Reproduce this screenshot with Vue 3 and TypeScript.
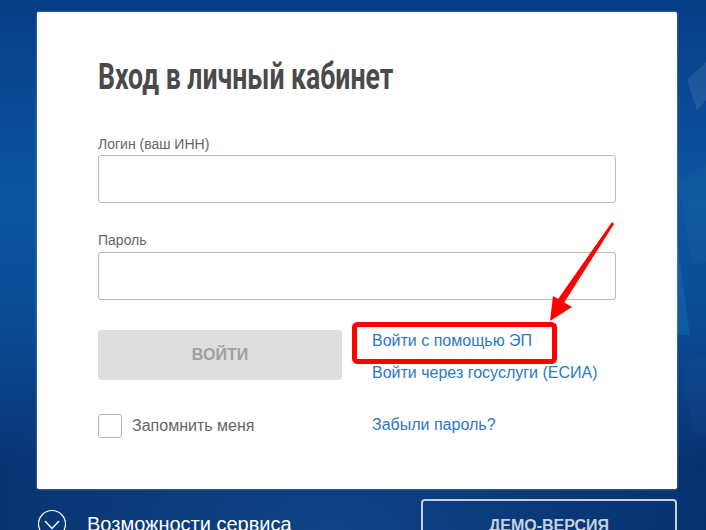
<script setup lang="ts">
const title = 'Вход в личный кабинет'
</script>

<template>
  <div class="page">
    <svg class="shards" width="706" height="530" viewBox="0 0 706 530">
      <polygon points="687,80 706,62 706,100 697,110" fill="#fff" opacity=".09" />
      <polygon points="678,180 706,165 706,262 692,265" fill="#fff" opacity=".025" />
      <polygon points="677,240 690,335 677,335" fill="#1f7fc4" opacity=".3" />
      <polygon points="680,362 706,355 706,436 694,436" fill="#fff" opacity=".02" />
      <polygon points="0,196 37,202 37,290 0,290" fill="#0b4f9c" opacity=".5" />
    </svg>

    <main class="card">
      <h1 class="title"><span>{{ title }}</span></h1>

      <label class="label">Логин (ваш ИНН)</label>
      <div class="input"></div>

      <label class="label second">Пароль</label>
      <div class="input"></div>

      <div class="actions">
        <div class="left">
          <button class="submit">ВОЙТИ</button>
          <div class="remember">
            <span class="check"></span>
            <span>Запомнить меня</span>
          </div>
        </div>
        <div class="links">
          <a>Войти с помощью ЭП</a>
          <a>Войти через госуслуги (ЕСИА)</a>
          <a class="forgot">Забыли пароль?</a>
        </div>
      </div>
    </main>

    <footer class="foot">
      <div class="features">
        <svg width="30" height="30" viewBox="0 0 30 30" fill="none" stroke="#fff">
          <circle cx="15" cy="15" r="13.5" stroke-width="1.2" />
          <path d="M8 12l7 7.5L22 12" stroke-width="1.4" />
        </svg>
        <span>Возможности сервиса</span>
      </div>
      <div class="demo">ДЕМО-ВЕРСИЯ</div>
    </footer>

    <!-- red annotation on top of the screenshot -->
    <svg class="mark" width="706" height="530" viewBox="0 0 706 530" fill="none">
      <rect x="354.5" y="324.5" width="200" height="37" rx="3" stroke="#fe0000" stroke-width="5" />
      <polygon points="612,222 614,224 562,306 556,302" fill="#fe0000" />
      <polygon points="550,321 553,296 572,307" fill="#fe0000" />
    </svg>
  </div>
</template>

<style>
html,
body {
  margin: 0;
  overflow: hidden;
}
</style>

<style scoped>
.page {
  position: relative;
  width: 706px;
  height: 530px;
  overflow: hidden;
  box-sizing: border-box;
  padding: 12px 29px 0 37px;
  font-family: 'Liberation Sans', Arial, sans-serif;
  background:
    radial-gradient(ellipse 420px 260px at 330px 540px, rgba(20, 90, 165, 0.45), transparent),
    linear-gradient(180deg, #063c86 0%, #0a4a96 20%, #0b549f 38%, #0a4a94 62%, #07316f 88%, #08306c 100%);
}
.shards {
  position: absolute;
  left: 0;
  top: 0;
}
.card {
  position: relative;
  box-sizing: border-box;
  height: 477px;
  padding: 45px 61px 0;
  background: #fff;
  border-radius: 2px;
  box-shadow: 0 0 2px rgba(255, 255, 255, 0.6);
}
.title {
  margin: 0 0 38px;
  height: 41px;
  font-family: 'Roboto', 'Liberation Sans', sans-serif;
  font-size: 36px;
  line-height: 41px;
  font-weight: 700;
  color: #4a4a4a;
  white-space: nowrap;
}
.title span {
  display: inline-block;
  transform: scaleX(0.74);
  transform-origin: left center;
}
.label {
  display: block;
  height: 16px;
  font-size: 14px;
  line-height: 16px;
  color: #666;
  margin-bottom: 3px;
}
.label.second {
  margin-top: 29px;
  margin-bottom: 4px;
}
.input {
  box-sizing: border-box;
  height: 48px;
  border: 1px solid #b9b9b9;
  border-radius: 3px;
  background: #fff;
}
.actions {
  display: flex;
  margin-top: 30px;
}
.left {
  width: 244px;
  margin-right: 30px;
}
.submit {
  display: block;
  width: 244px;
  height: 50px;
  border: 0;
  border-radius: 4px;
  background: #dedede;
  color: #a0a0a0;
  font-family: inherit;
  font-size: 16px;
  font-weight: 700;
}
.remember {
  display: flex;
  align-items: center;
  gap: 10px;
  margin-top: 34px;
  font-size: 16px;
  color: #666;
}
.check {
  box-sizing: border-box;
  width: 24px;
  height: 24px;
  border: 1px solid #b4b4b4;
  border-radius: 3px;
}
.links {
  display: flex;
  flex-direction: column;
  padding-top: 2px;
  font-size: 16px;
  line-height: 18px;
  color: #2a78c8;
}
.links a {
  margin-bottom: 14px;
  white-space: nowrap;
}
.links a.forgot {
  margin-top: 20px;
}
.foot {
  position: relative;
  display: flex;
  justify-content: space-between;
  margin-top: 10px;
}
.features {
  display: flex;
  align-items: center;
  gap: 20px;
  height: 30px;
  margin-top: 10px;
  color: #fff;
  font-size: 20px;
  white-space: nowrap;
}
.demo {
  box-sizing: border-box;
  width: 256px;
  height: 60px;
  padding-top: 16px;
  border: 2px solid #c4d0e2;
  border-radius: 4px;
  text-align: center;
  font-size: 16px;
  line-height: 18px;
  font-weight: 700;
  color: #c4d0e2;
}
.mark {
  position: absolute;
  left: 0;
  top: 0;
}
</style>
